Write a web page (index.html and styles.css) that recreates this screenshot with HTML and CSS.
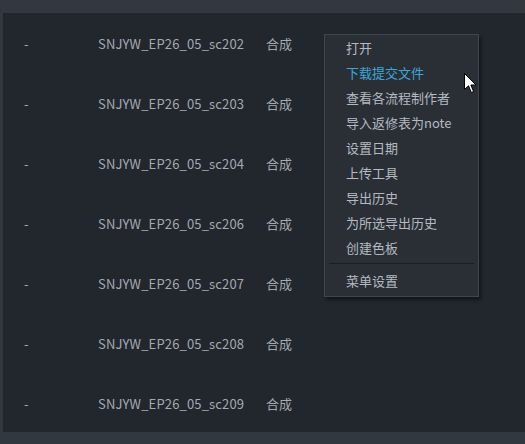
FILE: index.html
```html
<!DOCTYPE html>
<html>
<head>
<meta charset="utf-8">
<link rel="stylesheet" href="styles.css">
</head>
<body>
<div class="panel">
  <div class="row"><span class="c1">-</span><span class="c2">SNJYW_EP26_05_sc202</span><span class="c3">合成</span></div>
  <div class="row"><span class="c1">-</span><span class="c2">SNJYW_EP26_05_sc203</span><span class="c3">合成</span></div>
  <div class="row"><span class="c1">-</span><span class="c2">SNJYW_EP26_05_sc204</span><span class="c3">合成</span></div>
  <div class="row"><span class="c1">-</span><span class="c2">SNJYW_EP26_05_sc206</span><span class="c3">合成</span></div>
  <div class="row"><span class="c1">-</span><span class="c2">SNJYW_EP26_05_sc207</span><span class="c3">合成</span></div>
  <div class="row"><span class="c1">-</span><span class="c2">SNJYW_EP26_05_sc208</span><span class="c3">合成</span></div>
  <div class="row"><span class="c1">-</span><span class="c2">SNJYW_EP26_05_sc209</span><span class="c3">合成</span></div>
</div>
<div class="menu">
  <div class="item">打开</div>
  <div class="item active">下载提交文件</div>
  <div class="item">查看各流程制作者</div>
  <div class="item">导入返修表为note</div>
  <div class="item">设置日期</div>
  <div class="item">上传工具</div>
  <div class="item">导出历史</div>
  <div class="item">为所选导出历史</div>
  <div class="item">创建色板</div>
  <div class="sep"></div>
  <div class="item">菜单设置</div>
</div>
<svg class="cursor" width="13" height="21" viewBox="0 0 13 21">
  <path d="M0.5 0.5 L0.5 16.5 L4.5 12.8 L7.3 19.5 L9.6 18.5 L6.9 12 L12 12 Z" fill="#fff" stroke="#000" stroke-width="1" stroke-linejoin="miter"/>
</svg>
</body>
</html>
```
FILE: styles.css
```css
html, body {
  margin: 0;
  padding: 0;
}
body {
  width: 525px;
  height: 444px;
  background: #323840;
  font-family: "Noto Sans CJK SC", "Noto Sans", sans-serif;
  font-size: 13px;
  color: #a3aab2;
  overflow: hidden;
  position: relative;
}
.panel {
  margin: 13px 0 0 3px;
  height: 419px;
  background: #22262d;
  padding-top: 14px;
  box-sizing: border-box;
}
.row {
  height: 60px;
  display: flex;
  align-items: flex-start;
  line-height: 33px;
}
.c1 {
  width: 74px;
  padding-left: 21px;
  box-sizing: border-box;
  flex: none;
}
.c2 {
  width: 168px;
  padding-left: 21px;
  box-sizing: border-box;
  flex: none;
  letter-spacing: 0.15px;
}
.c3 {
  flex: none;
  padding-left: 21px;
}
.menu {
  position: absolute;
  left: 324px;
  top: 34px;
  width: 155px;
  box-sizing: border-box;
  background: #2a2f36;
  border: 1px solid #40464e;
  box-shadow: 2px 3px 3px rgba(0,0,0,0.45);
  padding: 0 0 3px 0;
}
.item {
  height: 25px;
  line-height: 25px;
  padding-left: 21px;
  color: #b4bac1;
}
.item.active {
  color: #3ba7d6;
}
.sep {
  height: 1px;
  background: #1a1d22;
  margin: 3px 4px 4px 4px;
}
.cursor {
  position: absolute;
  left: 464px;
  top: 73px;
}
```
